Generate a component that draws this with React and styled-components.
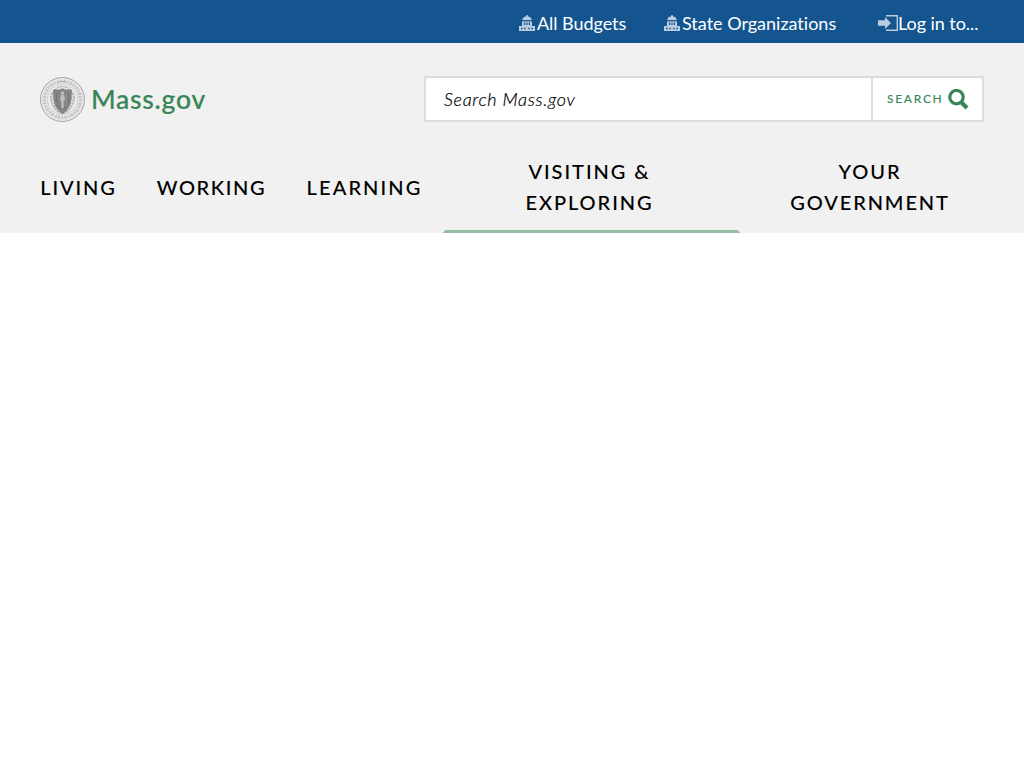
import React from "react";
import styled, { createGlobalStyle } from "styled-components";

const GlobalStyle = createGlobalStyle`
  *, *::before, *::after { box-sizing: border-box; }
  body {
    margin: 0;
    background: #fff;
    font-family: Lato, "Liberation Sans", sans-serif;
    font-variant-ligatures: none;
  }
`;

const UtilityBar = styled.nav`
  display: flex;
  justify-content: flex-end;
  align-items: center;
  height: 43px;
  padding: 2px 46px 0 0;
  background: #14558f;
`;

const UtilityLink = styled.a`
  display: flex;
  align-items: center;
  gap: ${(p) => p.$gap || 0}px;
  width: ${(p) => p.$width}px;
  margin-left: ${(p) => p.$offset || 0}px;
  color: #fff;
  font-size: 18px;
  line-height: 24px;
  letter-spacing: ${(p) => p.$spacing || 0}px;
  white-space: nowrap;

  svg { flex: none; display: block; }
`;

const Header = styled.header`
  height: 190px;
  padding: 33px 40px 0;
  background: #f1f1f1;
`;

const BrandRow = styled.div`
  display: flex;
  justify-content: space-between;
  align-items: center;
  height: 46px;
`;

const Brand = styled.a`
  display: flex;
  align-items: center;
  gap: 6px;
  color: #388557;

  svg { display: block; }
`;

const BrandName = styled.span`
  font-size: 26.5px;
  font-weight: 500;
  line-height: 40px;
  letter-spacing: 0.75px;
  -webkit-text-stroke: 0.2px #388557;
`;

const SearchForm = styled.div`
  display: flex;
  width: 560px;
  height: 46px;
  border: 2px solid #dcdcdc;
  background: #fff;
`;

const SearchField = styled.div`
  flex: 1;
  padding-left: 18px;
  color: #000;
  font-size: 18px;
  font-style: italic;
  font-weight: 300;
  line-height: 42px;
  letter-spacing: 0.68px;
  -webkit-text-stroke: 0.2px #000;
`;

const SearchButton = styled.div`
  display: flex;
  align-items: center;
  width: 111px;
  padding-left: 14px;
  border-left: 2px solid #dcdcdc;
  color: #388557;

  svg { display: block; margin-left: 5px; }
`;

const ButtonLabel = styled.span`
  padding-bottom: 1px;
  font-size: 12px;
  font-weight: 500;
  line-height: 17px;
  letter-spacing: 1.7px;
`;

const MainNav = styled.nav`
  display: flex;
  height: 111px;
  margin: 0 -20px;
`;

const NavItem = styled.a`
  display: flex;
  justify-content: center;
  align-items: center;
  width: ${(p) => p.$width}px;
  padding-top: ${(p) => (p.$single ? 23 : 22)}px;
  padding-right: ${(p) => p.$inset || 0}px;
  border: solid transparent;
  border-width: 0 2px 3px;
  border-bottom-color: ${(p) => (p.$active ? "#93bda4" : "transparent")};
  color: #000;
  font-size: 20px;
  font-weight: 500;
  line-height: 31px;
  letter-spacing: ${(p) => p.$spacing}px;
  text-align: center;
  text-transform: uppercase;
  white-space: pre-line;
  -webkit-text-stroke: 0.08px #000;
`;

const Capitol = () => (
  <svg width="16" height="16" viewBox="0 0 16 16">
    <path d="M7.300 0h1.400v1.300c2.500.4 3.800 1.900 4.200 4H3.100c.4-2.100 1.700-3.600 4.200-4zM3 6.200h10V11h3v5H0v-5h3z" fill="#b9cce0" />
    <path d="M5 7.500h1.200V10H5zm4.800 0H11V10H9.800zM7.400 7.500h1.200V10H7.400zM2 12.800h1.500v1.500H2zm3.200 0h1.500v1.500H5.200zm4.100 0h1.500v1.500H9.300zm3.200 0H14v1.500h-1.500zM3 5.500h10v.7H3z" fill="#14558f" />
  </svg>
);

const LoginIcon = () => (
  <svg width="20" height="16" viewBox="0 0 20 16">
    <path d="M0 5.2h7V2l6 6-6 6v-3.2H0z" fill="#b9cce0" />
    <path d="M8 .7h11.3v14.6H8" fill="none" stroke="#b9cce0" strokeWidth="1.4" />
  </svg>
);

const SearchIcon = () => (
  <svg width="21" height="21" viewBox="0 0 21 21" fill="none" stroke="#388557">
    <circle cx="8.500" cy="8.2" r="6.700" strokeWidth="3.2" />
    <path d="m13 13 6 6" strokeWidth="4.200" />
  </svg>
);

const Seal = () => (
  <svg width="45" height="45" viewBox="0 0 45 45" fill="none">
    <circle cx="22.5" cy="22.5" r="22" fill="#ededed" stroke="#a3a3a3" />
    <circle cx="22.5" cy="22.5" r="20.4" stroke="#d8d8d8" strokeWidth=".6" />
    <circle cx="22.5" cy="22.5" r="18" stroke="#c0c0c0" strokeWidth="3.2" strokeDasharray="1.5 .8 .7 .8 2 1" />
    <circle cx="22.5" cy="22.5" r="15.2" fill="#eee" stroke="#c5c5c5" strokeWidth=".8" />
    <path d="M16 11.5q6.5-4 13 0M19 4.500h7" stroke="#b5b5b5" strokeWidth="1.2" />
    <path d="M12.5 16c-3 5-.5 12 4 17 3.5 3.5 8.5 3.5 12 0 4.500-5 7-12 4-17" stroke="#bababa" strokeWidth="2.500" strokeDasharray="2.5 .7" />
    <path d="M14 12.500q4.500 1.500 8.500-.7 4 2.200 8.500.7l1 2.200c-1 1.500-.7 3-.7 5 0 7-3.300 13-8.800 17-5.500-4-8.800-10-8.800-17 0-2 .3-3.500-.7-5z" fill="#858585" stroke="#747474" strokeWidth=".7" />
    <path d="M16.500 16v7q.5 5 4 8.500M28.500 16v7q-.5 5-4 8.500" stroke="#757575" />
    <circle cx="22.5" cy="16" r="1.5" fill="#c8c8c8" />
    <path d="M20.700 18h3.600l.7 5-1.300 1v7h-2.400v-7L20 23z" fill="#bdbdbd" />
    <path d="M26.500 17v12" stroke="#a0a0a0" strokeWidth=".7" />
  </svg>
);

export default function App() {
  return (
    <>
      <GlobalStyle />
      <UtilityBar>
        <UtilityLink $width={107} $gap={2} $spacing={-0.05}><Capitol />All Budgets</UtilityLink>
        <UtilityLink $width={172} $gap={2} $offset={38}><Capitol />State Organizations</UtilityLink>
        <UtilityLink $width={100} $offset={42} $spacing={-0.05}><LoginIcon />Log in to...</UtilityLink>
      </UtilityBar>
      <Header>
        <BrandRow>
          <Brand><Seal /><BrandName>Mass.gov</BrandName></Brand>
          <SearchForm>
            <SearchField>Search Mass.gov</SearchField>
            <SearchButton><ButtonLabel>SEARCH</ButtonLabel><SearchIcon /></SearchButton>
          </SearchForm>
        </BrandRow>
        <MainNav>
          <NavItem $width={117} $single $spacing={1.9}>Living</NavItem>
          <NavItem $width={149} $single $spacing={1.6}>Working</NavItem>
          <NavItem $width={157} $single $spacing={2.1}>Learning</NavItem>
          <NavItem $width={297} $inset={4} $active $spacing={1.95}>{"Visiting &\nExploring"}</NavItem>
          <NavItem $width={260} $spacing={1.9}>{"Your\nGovernment"}</NavItem>
        </MainNav>
      </Header>
    </>
  );
}
